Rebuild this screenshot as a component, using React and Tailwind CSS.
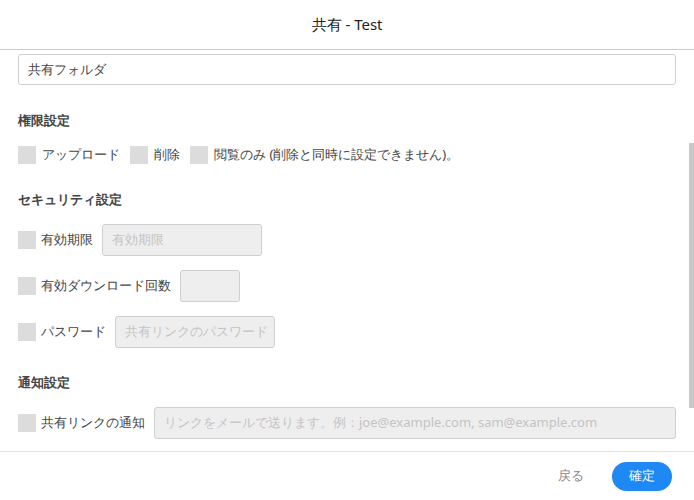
const Check = () => <span className="inline-block w-[18px] h-[18px] bg-[#dcdcdc] shrink-0" />;

const Field = ({ className, placeholder }) => (
  <div className={`h-[32px] border border-[#cfcfcf] bg-[#eeeeee] rounded-[3px] flex items-center px-[9px] text-[13px] text-[#c4c4c4] whitespace-nowrap overflow-hidden ${className}`}>
    {placeholder}
  </div>
);

export default function App() {
  return (
    <div className="w-[694px] h-[500px] bg-white text-[#444] text-[13px] font-['Noto_Sans_CJK_JP','Noto_Sans',sans-serif] flex flex-col overflow-hidden">
      <div className="h-[50px] shrink-0 flex items-center justify-center text-[15px] text-[#222] border-b border-[#cccccc]">共有 - Test</div>
      <div className="relative h-[401px] shrink-0 px-[18px] pt-[4px]">
        <div className="absolute right-0 top-[93px] w-[5px] h-[265px] bg-[#c8c8c8]" />
        <div className="h-[31px] border border-[#cfcfcf] rounded-[3px] flex items-center px-[9px] text-[#444]">共有フォルダ</div>
        <div className="mt-[26px] font-bold h-[20px] flex items-center">権限設定</div>
        <div className="mt-[14px] flex items-center gap-[6px] h-[20px]">
          <Check /><span className="mr-[4px]">アップロード</span>
          <Check /><span className="mr-[4px]">削除</span>
          <Check /><span>閲覧のみ (削除と同時に設定できません)。</span>
        </div>
        <div className="mt-[25px] font-bold h-[20px] flex items-center">セキュリティ設定</div>
        <div className="mt-[14px] flex items-center gap-[5px]"><Check /><span className="mr-[4px]">有効期限</span><Field className="w-[160px]" placeholder="有効期限" /></div>
        <div className="mt-[14px] flex items-center gap-[5px]"><Check /><span className="mr-[4px]">有効ダウンロード回数</span><Field className="w-[60px]" placeholder="" /></div>
        <div className="mt-[14px] flex items-center gap-[5px]"><Check /><span className="mr-[4px]">パスワード</span><Field className="w-[160px]" placeholder="共有リンクのパスワード" /></div>
        <div className="mt-[25px] font-bold h-[20px] flex items-center">通知設定</div>
        <div className="mt-[14px] flex items-center gap-[5px]"><Check /><span className="mr-[4px]">共有リンクの通知</span><Field className="flex-1" placeholder="リンクをメールで送ります。例：joe@example.com, sam@example.com" /></div>
      </div>
      <div className="flex-1 border-t border-[#e2e2e2] flex items-center justify-end px-[22px] gap-[28px]">
        <span className="text-[#888]">戻る</span>
        <button className="w-[60px] h-[29px] rounded-full bg-[#1e88f5] text-white text-[13px]">確定</button>
      </div>
    </div>
  );
}
